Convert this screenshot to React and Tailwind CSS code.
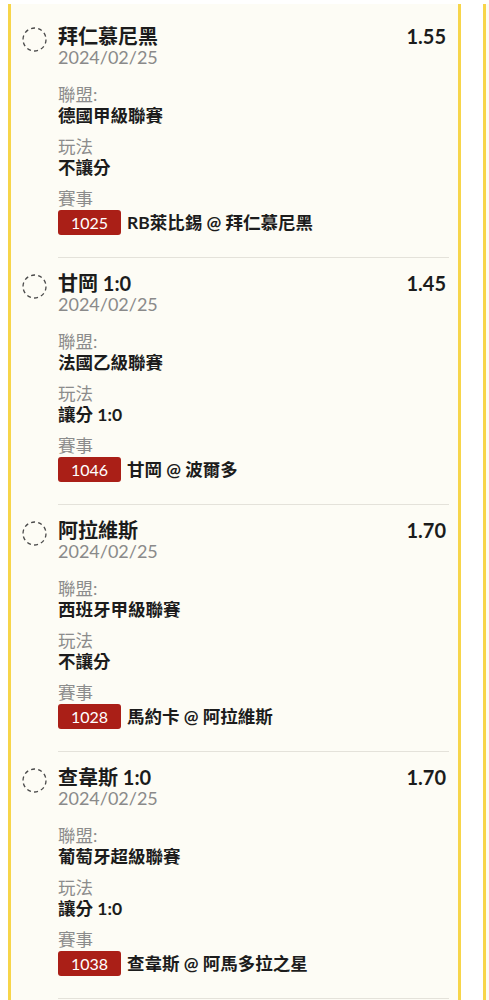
import React from 'react';

const bets = [
	{ team: '拜仁慕尼黑', odds: '1.55', date: '2024/02/25', league: '德國甲級聯賽', play: '不讓分', code: '1025', match: 'RB萊比錫 @ 拜仁慕尼黑' },
	{ team: '甘岡 1:0', odds: '1.45', date: '2024/02/25', league: '法國乙級聯賽', play: '讓分 1:0', code: '1046', match: '甘岡 @ 波爾多' },
	{ team: '阿拉維斯', odds: '1.70', date: '2024/02/25', league: '西班牙甲級聯賽', play: '不讓分', code: '1028', match: '馬約卡 @ 阿拉維斯' },
	{ team: '查韋斯 1:0', odds: '1.70', date: '2024/02/25', league: '葡萄牙超級聯賽', play: '讓分 1:0', code: '1038', match: '查韋斯 @ 阿馬多拉之星' }
];

function DashedCircle() {
	return (
		<svg width="25" height="25" viewBox="0 0 25 25" className="shrink-0 mt-[16px]">
			<circle cx="12.5" cy="12.5" r="11.5" fill="none" stroke="#4a4a4a" strokeWidth="1.3" strokeDasharray="4 3.2" />
		</svg>
	);
}

function BetItem({ bet }) {
	return (
		<div className="flex items-start pl-[11px] pr-[9px]">
			<DashedCircle />
			<div className="flex-1 ml-[11px] pt-[14px] pb-[22px] border-b border-[#e4e2da]">
				<div className="flex items-start justify-between pr-[3px]">
					<div className="text-[20px] leading-[22px] font-bold text-[#1c1c1c]">{bet.team}</div>
					<div className="text-[20px] leading-[22px] font-bold text-[#1c1c1c]">{bet.odds}</div>
				</div>
				<div className="text-[18px] leading-[20px] text-[#8a8a8a]">{bet.date}</div>

				<div className="mt-[18px] text-[17.5px] leading-[20px] text-[#8c8c8c]">聯盟:</div>
				<div className="text-[17.5px] leading-[22px] font-bold text-[#1c1c1c]">{bet.league}</div>

				<div className="mt-[10px] text-[17.5px] leading-[20px] text-[#8c8c8c]">玩法</div>
				<div className="text-[17.5px] leading-[22px] font-bold text-[#1c1c1c]">{bet.play}</div>

				<div className="mt-[10px] text-[17.5px] leading-[20px] text-[#8c8c8c]">賽事</div>
				<div className="mt-[1px] flex items-center">
					<span className="w-[63px] h-[25px] flex items-center justify-center rounded-[3px] bg-[#aa1f17] text-white text-[16px]">
						{bet.code}
					</span>
					<span className="ml-[6px] text-[17.5px] leading-[22px] font-bold text-[#1c1c1c]">{bet.match}</span>
				</div>
			</div>
		</div>
	);
}

export default function App() {
	return (
		<div
			className="h-[1000px] w-[489px] overflow-hidden bg-white flex gap-[22px] pl-[8px] pt-[4px]"
			style={{ fontFamily: 'Lato, "Noto Sans CJK TC", sans-serif' }}
		>
			<div className="w-[453px] shrink-0 bg-[#fdfcf5] border-x-[3px] border-[#f7d54a] pt-[7px]">
				{bets.map((bet) => (
					<BetItem key={bet.code} bet={bet} />
				))}
			</div>
			<div className="w-[453px] shrink-0 bg-[#fdfcf5] border-l-[3px] border-[#f7d54a]" />
		</div>
	);
}
